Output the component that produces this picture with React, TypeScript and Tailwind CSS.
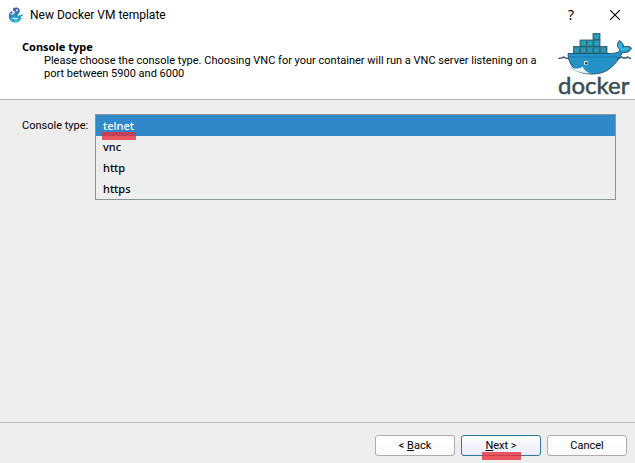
import type { ReactNode } from "react";

const consoleTypes = ["telnet", "vnc", "http", "https"];

function AppIcon() {
  return (
    <svg viewBox="0 0 16 16" className="size-4" aria-hidden="true">
      <defs>
        <linearGradient id="gecko" x1="0" y1="0" x2="0.3" y2="1">
          <stop offset="0" stopColor="#5b4fa8" />
          <stop offset="0.5" stopColor="#2f7fc0" />
          <stop offset="1" stopColor="#2aaec8" />
        </linearGradient>
      </defs>
      <path
        d="M5 1.5C7 0 10.500 .3 11.500 2.500C12.500 4.500 11.500 6 10 7.500C9 8.500 10 9 11 8.500L14.500 7.200L15 8.300L13 9.500C14 12.500 11 15.600 7.500 15.600C3.500 15.600 .8 13 .8 9.500C.8 7 1.800 5 3.500 4L5 5.500C4 6.500 3.600 7.500 4 8.500C5 7 7.500 6.500 7 4.500L5 4Z"
        fill="url(#gecko)"
      />
      <circle cx="9" cy="3.200" r="1" fill="#e8f3ff" />
      <path d="M5 10.500Q7 12.800 10 11" stroke="#d9f2fa" strokeWidth="1.200" fill="none" />
      <path d="M2 6.500L4.500 7.500M3 12.500L5 11.500M8 15L8 13" stroke="#d9f2fa" strokeWidth=".6" />
    </svg>
  );
}

function DockerLogo() {
  return (
    <svg viewBox="0 -2 76 69" className="h-[69px] w-[76px] shrink-0" role="img" aria-label="docker">
      <g stroke="#2c5b6b" strokeWidth=".8">
        <rect x="35" y="1.500" width="7" height="6.500" fill="#1f93ab" />
        <rect x="22" y="8" width="20" height="6.500" fill="#1f93ab" />
        <rect x="15.500" y="14.500" width="33.500" height="7" fill="#2387a6" />
        <path d="M28.700 8V21.500M35.300 8V21.500M42 14.500V21.500M22 14.500V21.500" fill="none" />
      </g>
      <path
        d="M17.700 16V20M19.700 16V20M24.300 16V20M26.300 16V20M31 16V20M33 16V20M37.700 16V20M39.700 16V20M44.500 16V20M46.500 16V20M24.300 9.500V13M26.300 9.500V13M31 9.500V13M33 9.500V13M37.700 9.500V13M39.700 9.500V13M37.700 3V7M39.700 3V7"
        stroke="#55b5c5"
        strokeWidth=".6"
      />
      <path
        d="M10 21.500H51C56 21.500 60.500 21 62 18C59 15 58.500 12 61.500 8.500C64 10 65.500 12 65.500 15C68.500 13.800 71.500 14.100 73.500 16C72 20 68.500 21 64.500 20.500C60.500 28 56 34 49 38.500C43 41.800 36 42.500 29 41.700C18 40.500 10.500 34 10 21.500Z"
        fill="#2393c7"
        stroke="#285769"
        strokeWidth="1"
      />
      <path d="M61.700 10C63.500 11.500 64.500 13.500 64.500 16.500C67 15 70 15 72 16.200C69.500 19 66 19.300 63 18.500C60.500 16.500 59.500 13 61.700 10Z" fill="#38b5dd" />
      <path d="M11 25H59" stroke="#1c79ad" strokeWidth="1.200" />
      <path d="M12.500 35.500C17 37 22 36.500 25 34.500C25.500 37.500 29 40 33 41.500C24 42 16.500 39 12.500 35.500Z" fill="#e9f3f6" stroke="#5c8798" strokeWidth=".4" />
      <circle cx="28" cy="31" r="2.200" fill="#d8eef5" />
      <circle cx="28.200" cy="31.200" r="1.200" fill="#1d4050" />
      <path d="M.5 26.500L4 26L5.500 24.800L7 26L10.500 26.500M59 26.500L62 26L63.500 24.800L65 26H68L69.500 24.800L71 26L73 26.500" stroke="#31566a" strokeWidth="1.300" fill="none" />
      <text x="0" y="62" fill="#394d54" fontFamily="Lato, sans-serif" fontSize="24" stroke="#394d54" strokeWidth=".5">
        docker
      </text>
    </svg>
  );
}

function WizardButton({ children, primary = false }: { children: ReactNode; primary?: boolean }) {
  return (
    <button
      type="button"
      className={
        primary
          ? "relative h-[21px] w-20 rounded-[3px] border border-[#2f7697] bg-linear-to-b from-white to-[#e8eafa] text-[11px] leading-4"
          : "relative h-[21px] w-20 rounded-[3px] border border-[#adadad] bg-linear-to-b from-white to-[#fafafa] text-[11px] leading-4"
      }
    >
      {children}
    </button>
  );
}

export default function App() {
  return (
    <div className="flex min-h-screen flex-col bg-[#eeeeee] font-['Roboto',sans-serif] text-[12px] text-black">
      <header className="border-b border-[#b4b4b4] bg-white">
        <div className="flex h-[30px] items-center pr-[10px] pl-2">
          <AppIcon />
          <h1 className="ml-[6px] flex-1 text-[12px]">New Docker VM template</h1>
          <button type="button" aria-label="Help" className="w-5 font-['Noto_Sans',sans-serif] text-[14px] leading-4">
            ?
          </button>
          <button type="button" aria-label="Close" className="ml-6 flex w-5 justify-center">
            <svg viewBox="0 0 10 10" className="size-[10px]" stroke="black" strokeWidth="1.100" aria-hidden="true">
              <path d="M0 0L10 10M10 0L0 10" />
            </svg>
          </button>
        </div>
        <div className="flex h-[69px] justify-between pr-px pl-[22px]">
          <div className="pt-[10px]">
            <h2 className="font-['Noto_Sans',sans-serif] text-[11px] leading-[14px] font-bold">Console type</h2>
            <p className="max-w-[520px] pl-[22px] text-[11px] leading-[13px]">
              Please choose the console type. Choosing VNC for your container will run a VNC server listening on a port
              between 5900 and 6000
            </p>
          </div>
          <DockerLogo />
        </div>
      </header>

      <main className="flex flex-1 items-start pt-[14px] pr-[19px] pl-[22px]">
        <label htmlFor="console-type" className="w-[73px] shrink-0 pt-1 text-[11px] leading-4">
          Console type:
        </label>
        <div className="relative flex-1">
          <select
            id="console-type"
            size={4}
            defaultValue="telnet"
            className="block h-[86px] w-full appearance-none overflow-hidden border border-[#8c9494] bg-[#eeeeee] p-0 font-['Noto_Sans',sans-serif] text-[11px] outline-none"
          >
            {consoleTypes.map((type) => (
              <option
                key={type}
                value={type}
                className="h-[21px] px-[7px] pt-[3px] pb-0 font-medium checked:bg-linear-to-b checked:from-[#3088c9] checked:to-[#3088c9] checked:[-webkit-text-fill-color:white]"
              >
                {type}
              </option>
            ))}
          </select>
          <span className="absolute top-[18px] left-[7px] h-2 w-[34px] bg-[#e8303c]/80" />
        </div>
      </main>

      <footer className="flex h-[41px] justify-end gap-[6px] border-t border-[#b8b8b8] pt-3 pr-2">
        <WizardButton>
          &lt; <u>B</u>ack
        </WizardButton>
        <WizardButton primary>
          <u>N</u>ext &gt;
          <span className="absolute top-4 left-5 h-2 w-[39px] bg-[#e8303c]/80" />
        </WizardButton>
        <WizardButton>Cancel</WizardButton>
      </footer>
    </div>
  );
}
